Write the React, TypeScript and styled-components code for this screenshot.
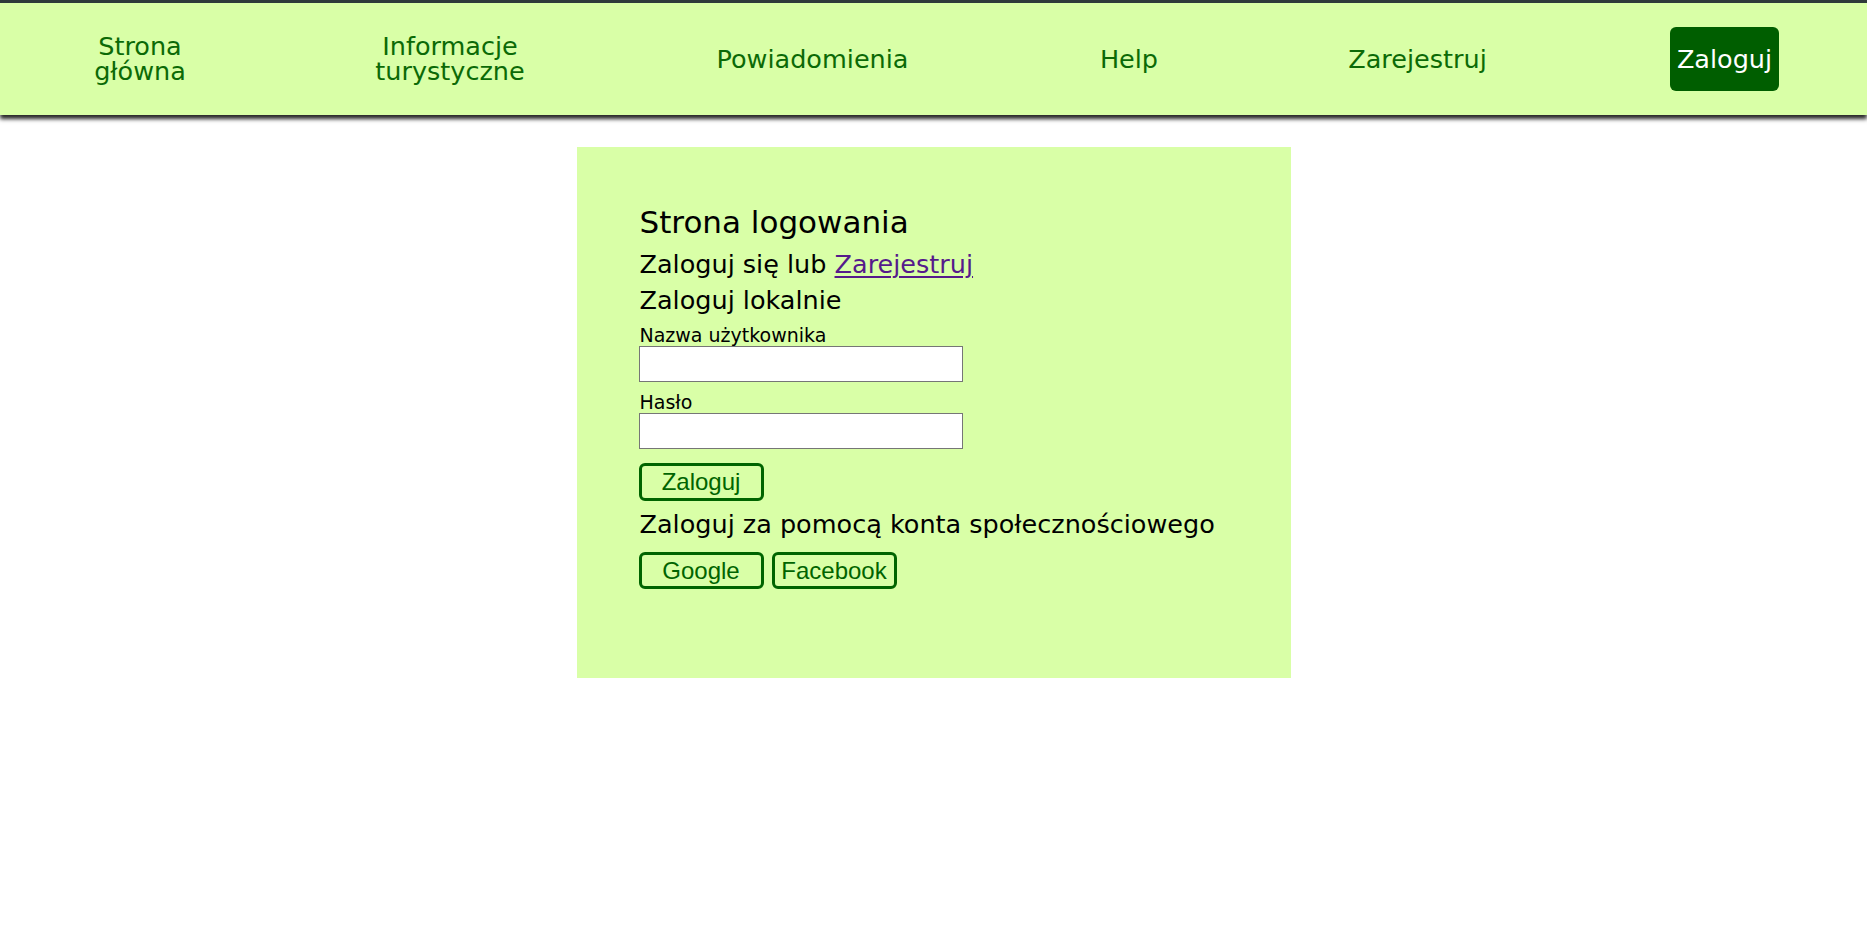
import React from "react";
import styled, { createGlobalStyle } from "styled-components";

const GlobalStyle = createGlobalStyle`
  html, body {
    margin: 0;
    padding: 0;
    background: #ffffff;
    font-family: "DejaVu Sans", "Liberation Sans", sans-serif;
  }
  * { box-sizing: border-box; }
`;

const NavBar = styled.nav`
  display: grid;
  grid-template-columns: 280fr 340fr 385fr 248fr 329fr 285fr;
  align-items: center;
  height: 115px;
  background: #d9ffa7;
  border-top: 3px solid #2e3a3a;
  box-shadow: 0 4px 4px rgba(0, 0, 0, 0.85);
  position: relative;
  z-index: 1;
`;

const NavCell = styled.div`
  display: flex;
  justify-content: center;
  align-items: center;
`;

const NavLink = styled.a<{ $wrap?: number }>`
  display: block;
  max-width: ${(p) => (p.$wrap ? `${p.$wrap}px` : "none")};
  text-align: center;
  font-size: 25.5px;
  line-height: 25px;
  color: #0b6a06;
  text-decoration: none;
  cursor: pointer;
`;

const NavButton = styled.a`
  display: flex;
  align-items: center;
  justify-content: center;
  width: 109px;
  height: 64px;
  border-radius: 6px;
  background: #005e00;
  color: #ffffff;
  font-size: 25.5px;
  text-decoration: none;
  cursor: pointer;
`;

const Main = styled.main`
  display: flex;
  justify-content: center;
  padding-top: 32px;
`;

const Card = styled.section`
  width: 714px;
  height: 531px;
  background: #d9ffa7;
  padding: 57px 62px 0 62px;
  display: flex;
  flex-direction: column;
  align-items: flex-start;
  color: #000000;
`;

const Title = styled.h2`
  margin: 0 0 9px 1px;
  font-size: 31px;
  font-weight: normal;
  line-height: 36px;
`;

const SubTitle = styled.h3<{ $gap?: number; $top?: number }>`
  margin: ${(p) => p.$top ?? 0}px 0 ${(p) => p.$gap ?? 6}px 1px;
  font-size: 25.5px;
  font-weight: normal;
  line-height: 30px;
`;

const RegisterLink = styled.a`
  color: #551a8b;
  text-decoration: underline;
  text-decoration-thickness: 1.5px;
  text-underline-offset: 3px;
  cursor: pointer;
`;

const Label = styled.label`
  display: block;
  margin-left: 1px;
  font-size: 19px;
  line-height: 22px;
`;

const Input = styled.input<{ $gap?: number }>`
  display: block;
  width: 324px;
  height: 36px;
  margin: 0 0 ${(p) => p.$gap ?? 9}px 0;
  border: 1px solid #767676;
  background: #ffffff;
  padding: 2px 4px;
  font-size: 16px;
`;

const FormButton = styled.button<{ $tall?: number }>`
  width: 125px;
  height: ${(p) => p.$tall ?? 38}px;
  padding: 0;
  border: 3px solid #006400;
  border-radius: 6px;
  background: transparent;
  color: #006400;
  font-family: "Liberation Sans", Arial, sans-serif;
  font-size: 24px;
  white-space: nowrap;
  cursor: pointer;
`;

const ButtonRow = styled.div`
  display: flex;
  gap: 8px;
`;

export default function App() {
  return (
    <>
      <GlobalStyle />
      <NavBar>
        <NavCell>
          <NavLink $wrap={140}>Strona główna</NavLink>
        </NavCell>
        <NavCell>
          <NavLink $wrap={170}>Informacje turystyczne</NavLink>
        </NavCell>
        <NavCell>
          <NavLink>Powiadomienia</NavLink>
        </NavCell>
        <NavCell>
          <NavLink>Help</NavLink>
        </NavCell>
        <NavCell>
          <NavLink>Zarejestruj</NavLink>
        </NavCell>
        <NavCell>
          <NavButton>Zaloguj</NavButton>
        </NavCell>
      </NavBar>
      <Main>
        <Card>
          <Title>Strona logowania</Title>
          <SubTitle>
            Zaloguj się lub <RegisterLink>Zarejestruj</RegisterLink>
          </SubTitle>
          <SubTitle $gap={9}>Zaloguj lokalnie</SubTitle>
          <Label htmlFor="username">Nazwa użytkownika</Label>
          <Input id="username" type="text" $gap={9} />
          <Label htmlFor="password">Hasło</Label>
          <Input id="password" type="password" $gap={14} />
          <FormButton>Zaloguj</FormButton>
          <SubTitle $top={8} $gap={13}>
            Zaloguj za pomocą konta społecznościowego
          </SubTitle>
          <ButtonRow>
            <FormButton $tall={37}>Google</FormButton>
            <FormButton $tall={37}>Facebook</FormButton>
          </ButtonRow>
        </Card>
      </Main>
    </>
  );
}
